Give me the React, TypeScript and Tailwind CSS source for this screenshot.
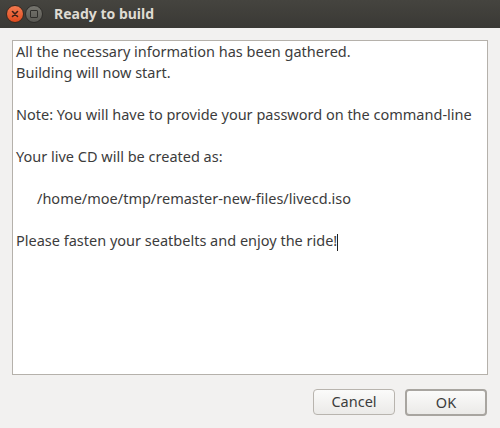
import React from "react";

export default function App() {
  const font = { fontFamily: '"Noto Sans", "Open Sans", sans-serif' };
  return (
    <div className="w-[500px] h-[428px] bg-[#f2f1f0] flex flex-col overflow-hidden" style={font}>
      <div className="h-[28px] bg-gradient-to-b from-[#45443f] to-[#3a3935] flex items-center pl-[6px] shrink-0">
        <div className="w-[18px] h-[18px] rounded-full bg-gradient-to-b from-[#f37a4f] to-[#df4a1c] border border-[#3a2a20] flex items-center justify-center">
          <svg width="8" height="8" viewBox="0 0 8 8">
            <path d="M1.5 1.5 L6.5 6.5 M6.5 1.5 L1.5 6.5" stroke="#3b2018" strokeWidth="1.6" strokeLinecap="round" />
          </svg>
        </div>
        <div className="ml-[1px] w-[18px] h-[18px] rounded-full bg-gradient-to-b from-[#77766f] to-[#5a5954] border border-[#2e2d2a] flex items-center justify-center">
          <div className="w-[8px] h-[8px] border-[1.5px] border-[#2f2e2b] rounded-[1px]" />
        </div>
        <div className="ml-[11px] text-[14px] font-bold text-[#dfdbd2] leading-none">Ready to build</div>
      </div>
      <div className="flex-1 flex flex-col px-[12px] pt-[12px]">
        <div className="h-[335px] bg-white border border-[#b5b1ab] px-[3px] pt-0 text-[14.5px] leading-[21px] text-[#3c3c3c]">
          <div>All the necessary information has been gathered.</div>
          <div>Building will now start.</div>
          <div>&nbsp;</div>
          <div>Note: You will have to provide your password on the command-line</div>
          <div>&nbsp;</div>
          <div>Your live CD will be created as:</div>
          <div>&nbsp;</div>
          <div className="pl-[21px]">/home/moe/tmp/remaster-new-files/livecd.iso</div>
          <div>&nbsp;</div>
          <div>
            Please fasten your seatbelts and enjoy the ride!
            <span className="inline-block w-px h-[17px] bg-[#222] align-middle" />
          </div>
        </div>
        <div className="flex justify-end gap-[10px] mt-[14px] pr-[1px]">
          <button className="w-[82px] h-[26px] rounded-[4px] border border-[#b8b4ae] bg-gradient-to-b from-[#fbfbfa] to-[#ebeae8] text-[14.5px] text-[#3c3c3c]">
            Cancel
          </button>
          <button className="w-[82px] h-[27px] rounded-[4px] border-2 border-[#a8a5a0] bg-gradient-to-b from-[#fbfbfa] to-[#ebeae8] text-[14.5px] text-[#3c3c3c]">
            OK
          </button>
        </div>
      </div>
    </div>
  );
}
